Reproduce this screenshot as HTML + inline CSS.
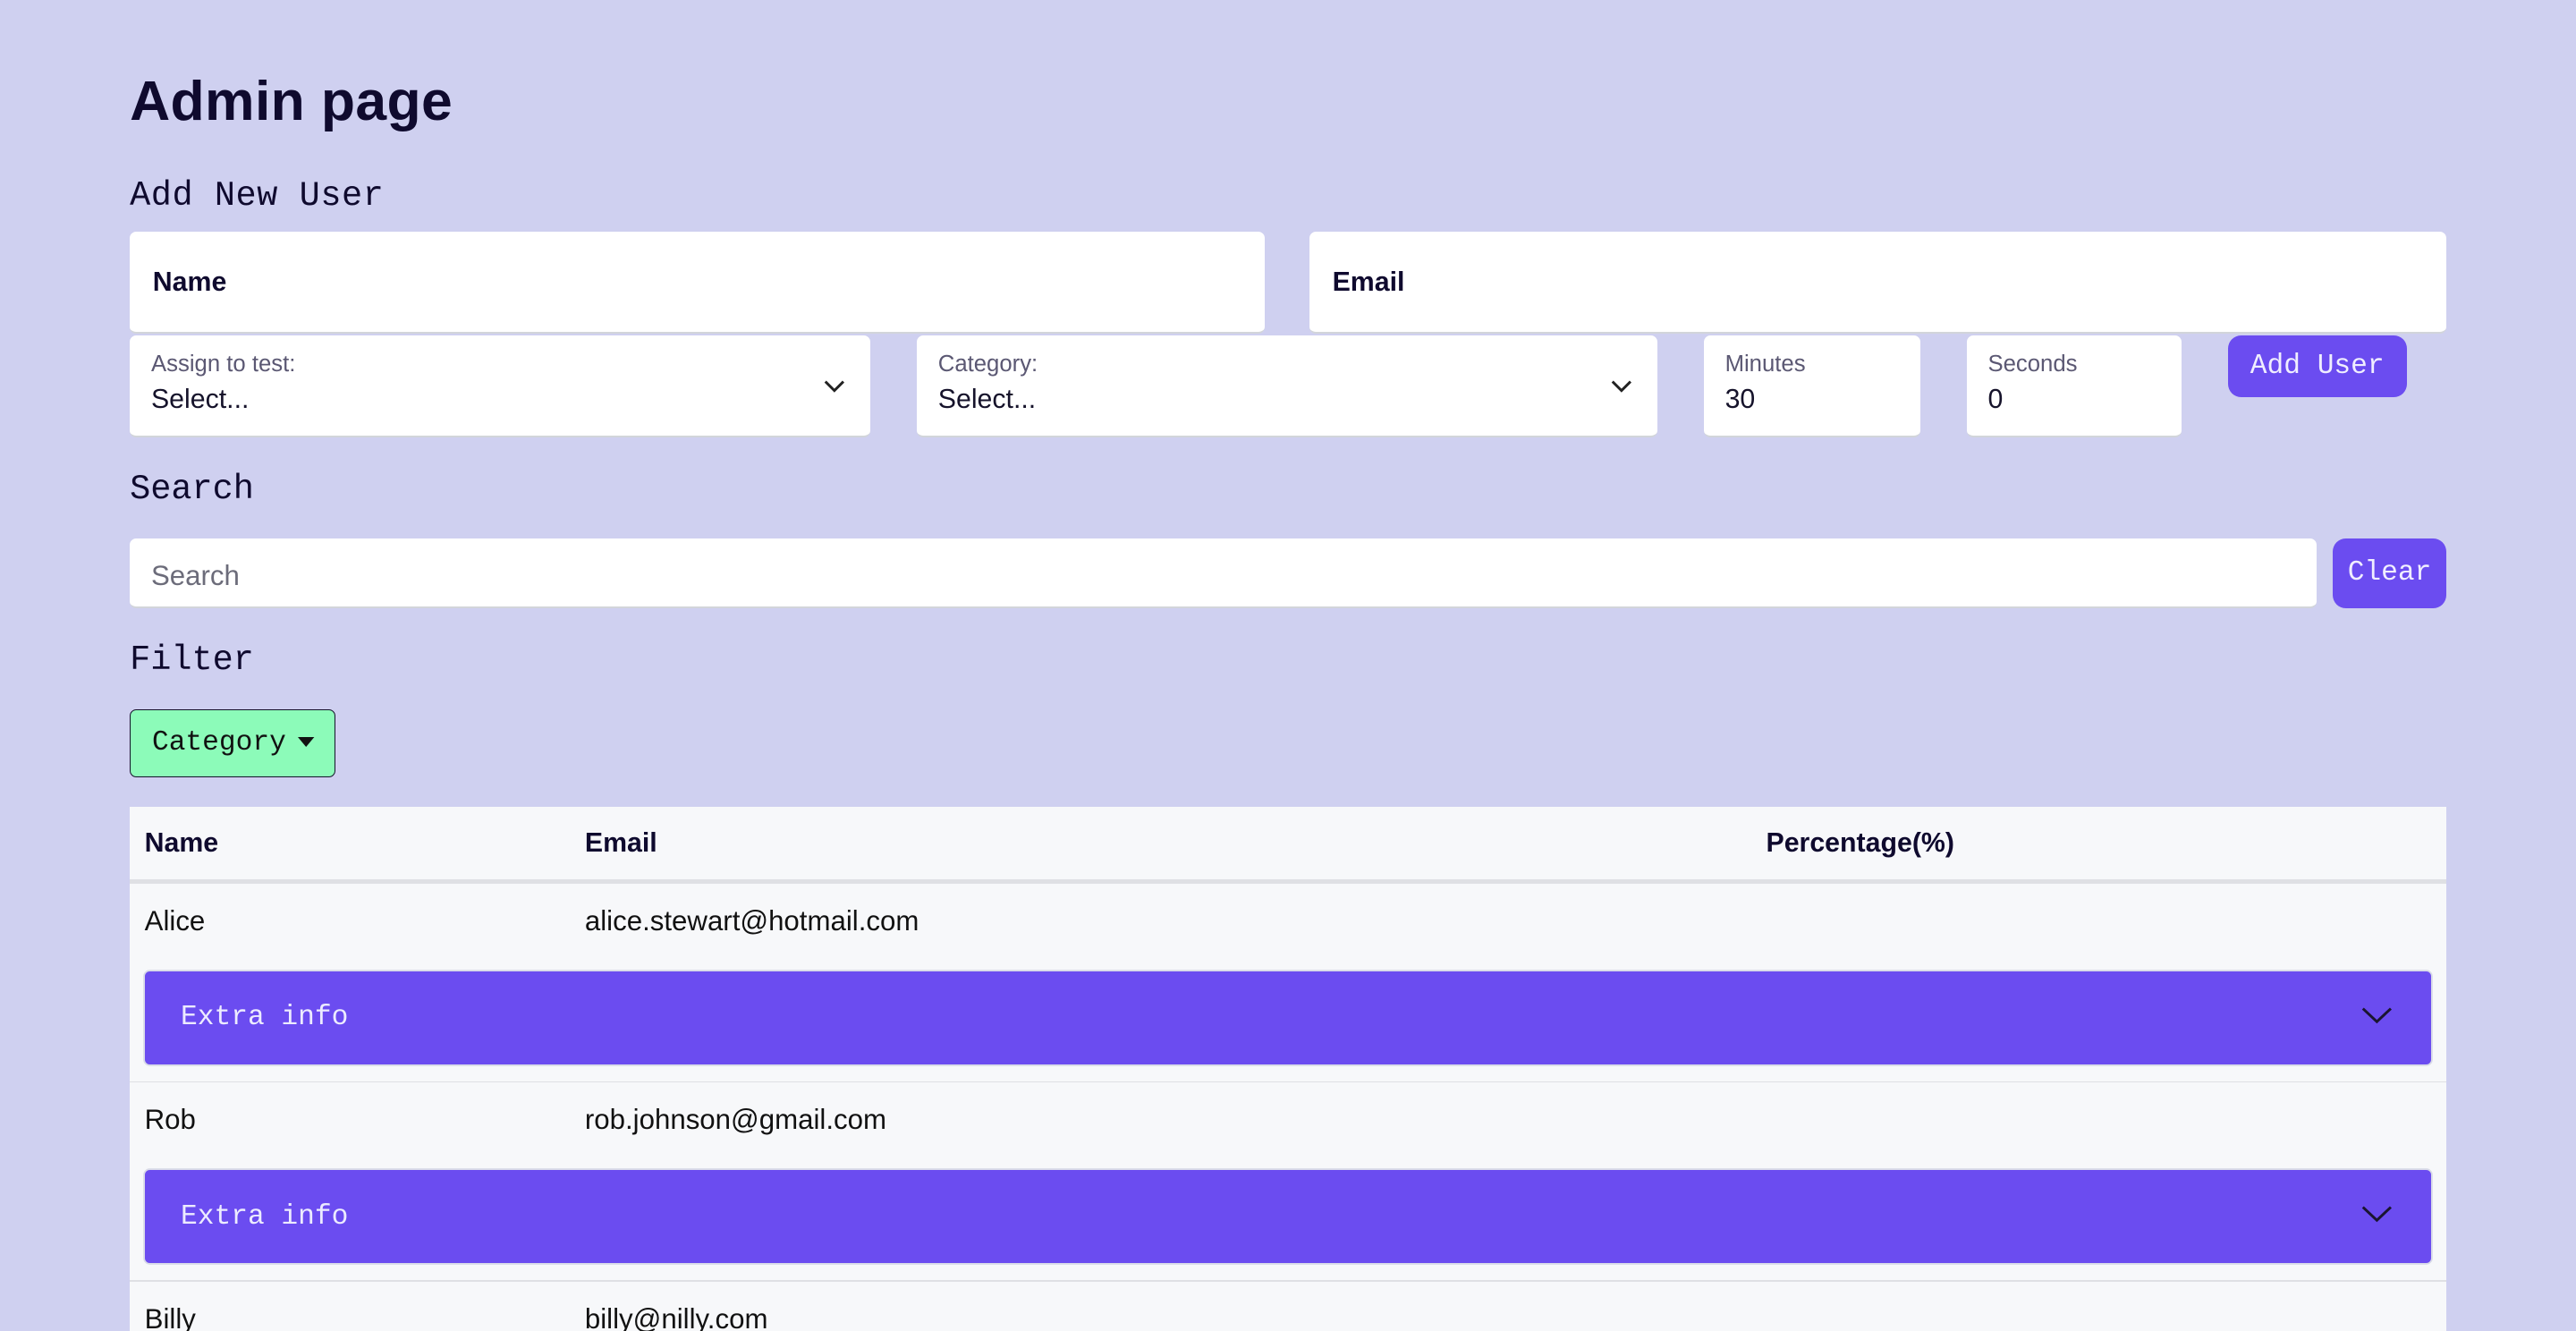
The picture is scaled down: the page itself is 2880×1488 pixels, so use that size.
<!DOCTYPE html>
<html><head><meta charset="utf-8"><style>
html,body{margin:0;padding:0;width:2880px;height:1488px;overflow:hidden;background:#cfd0f0}
#w{zoom:1.836735;position:relative;width:1568px;height:810px;font-family:"Liberation Sans",sans-serif;color:#0f0a2e}
.a{position:absolute}
.mono{font-family:"Liberation Mono",monospace}
.box{position:absolute;background:#fff;border-radius:4px;border-bottom:1.5px solid #d2d5da;box-sizing:border-box}
.lab{position:absolute;left:13px;top:10px;font-size:14px;color:#5b5873}
.val{position:absolute;left:13px;top:30px;font-size:16.5px;color:#16132b}
.btn{position:absolute;background:#6b4cf0;border-radius:8px;color:#f0eeff;font-family:"Liberation Mono",monospace;font-size:17px;text-align:center}
.chev{position:absolute}
.bar{position:absolute;left:88px;width:1392px;height:57px;background:#6b4cf0;border-radius:3px;box-shadow:0 0 0 1px #d9dbe8}
.bar span{position:absolute;left:22px;top:19px;color:#ecebff;font-family:"Liberation Mono",monospace;font-size:17px}
.cell{position:absolute;font-size:17px;color:#111}
</style></head><body><div id="w">
<div class="a" style="left:79px;top:42px;font-size:34px;font-weight:bold;letter-spacing:0.2px">Admin page</div>
<div class="a mono" style="left:79px;top:107px;font-size:21px;letter-spacing:0.3px">Add New User</div>

<div class="box" style="left:79px;top:141px;width:691px;height:62px"><div class="a" style="left:14px;top:22px;font-size:16.5px;font-weight:bold">Name</div></div>
<div class="box" style="left:797px;top:141px;width:692px;height:62px"><div class="a" style="left:14px;top:22px;font-size:16.5px;font-weight:bold">Email</div></div>

<div class="box" style="left:79px;top:204px;width:451px;height:62px"><div class="lab">Assign to test:</div><div class="val">Select...</div>
<svg class="chev" style="left:422px;top:26px" width="14" height="10" viewBox="0 0 14 10"><path d="M1.5 2.5 L7 8 L12.5 2.5" fill="none" stroke="#222" stroke-width="1.6"/></svg></div>
<div class="box" style="left:558px;top:204px;width:451px;height:62px"><div class="lab">Category:</div><div class="val">Select...</div>
<svg class="chev" style="left:422px;top:26px" width="14" height="10" viewBox="0 0 14 10"><path d="M1.5 2.5 L7 8 L12.5 2.5" fill="none" stroke="#222" stroke-width="1.6"/></svg></div>
<div class="box" style="left:1037px;top:204px;width:132px;height:62px"><div class="lab">Minutes</div><div class="val">30</div></div>
<div class="box" style="left:1197px;top:204px;width:131px;height:62px"><div class="lab">Seconds</div><div class="val">0</div></div>
<div class="btn" style="left:1356px;top:204px;width:109px;height:38px;line-height:38px">Add User</div>

<div class="a mono" style="left:79px;top:286px;font-size:21px">Search</div>
<div class="box" style="left:79px;top:328px;width:1331px;height:42px"><div class="a" style="left:13px;top:13px;font-size:17px;color:#6c6c7a">Search</div></div>
<div class="btn" style="left:1420px;top:328px;width:69px;height:42px;line-height:42px">Clear</div>

<div class="a mono" style="left:79px;top:390px;font-size:21px">Filter</div>
<div class="a mono" style="left:79px;top:432px;width:125px;height:41px;box-sizing:border-box;background:#8cfbb9;border:1px solid #15122a;border-radius:4px;font-size:17px;line-height:40px;padding-left:13px;color:#111">Category<svg style="position:absolute;left:102px;top:16px" width="10" height="6" viewBox="0 0 10 6"><path d="M0 0H10L5 6Z" fill="#111"/></svg></div>

<div class="a" style="left:79px;top:491px;width:1410px;height:319px;background:#f7f8fa"></div>
<div class="a" style="left:79px;top:535px;width:1410px;height:3px;background:#dfe0e4"></div>
<div class="a" style="left:88px;top:504px;font-size:16.5px;font-weight:bold">Name</div>
<div class="a" style="left:356px;top:504px;font-size:16.5px;font-weight:bold">Email</div>
<div class="a" style="left:1075px;top:504px;font-size:16.5px;font-weight:bold">Percentage(%)</div>

<div class="cell" style="left:88px;top:551px">Alice</div>
<div class="cell" style="left:356px;top:551px">alice.stewart@hotmail.com</div>
<div class="bar" style="top:591px"><span>Extra info</span><svg style="position:absolute;left:1349px;top:20px" width="20" height="14" viewBox="0 0 20 14"><path d="M1.5 3 L10 11 L18.5 3" fill="none" stroke="#1a1530" stroke-width="1.6"/></svg></div>
<div class="a" style="left:79px;top:658px;width:1410px;height:1px;background:#dfe0e4"></div>

<div class="cell" style="left:88px;top:672px">Rob</div>
<div class="cell" style="left:356px;top:672px">rob.johnson@gmail.com</div>
<div class="bar" style="top:712px"><span>Extra info</span><svg style="position:absolute;left:1349px;top:20px" width="20" height="14" viewBox="0 0 20 14"><path d="M1.5 3 L10 11 L18.5 3" fill="none" stroke="#1a1530" stroke-width="1.6"/></svg></div>
<div class="a" style="left:79px;top:779px;width:1410px;height:1px;background:#dfe0e4"></div>

<div class="cell" style="left:88px;top:793px">Billy</div>
<div class="cell" style="left:356px;top:793px">billy@nilly.com</div>
</div></body></html>
